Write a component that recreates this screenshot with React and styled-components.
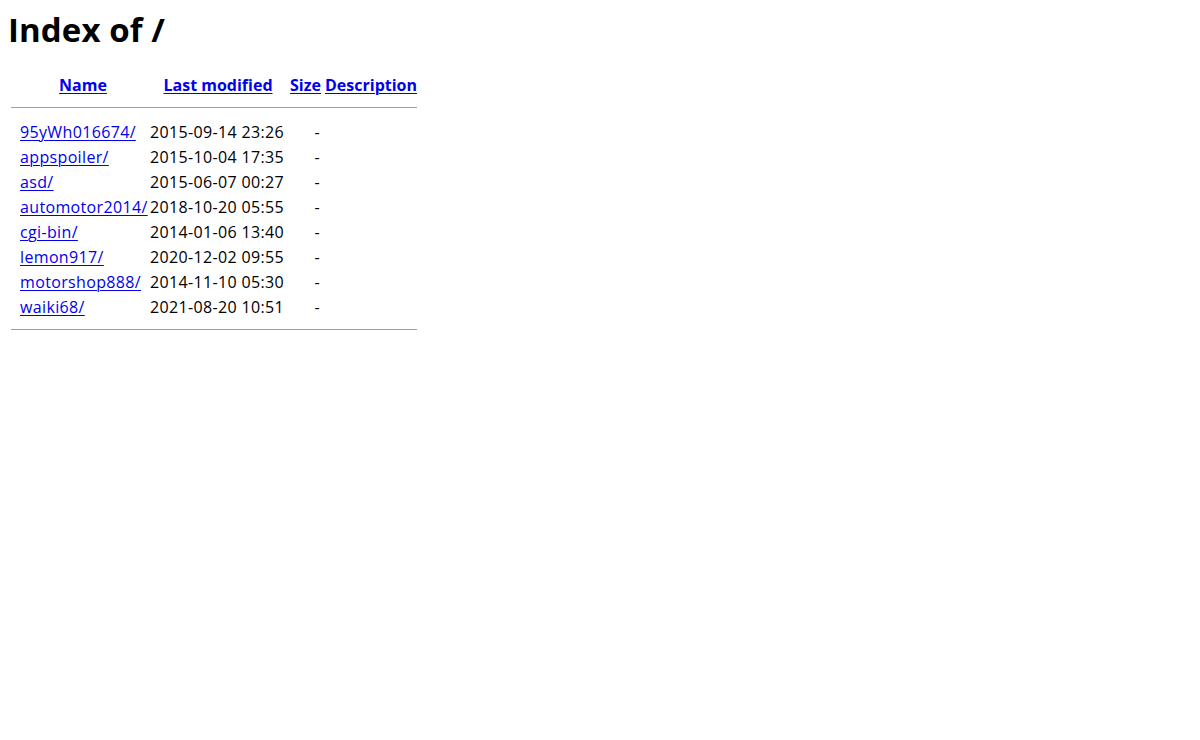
import React from "react";
import styled, { createGlobalStyle } from "styled-components";

const Global = createGlobalStyle`
  html, body { background: #fff; }
  body {
    margin: 0;
    font-family: "Open Sans", "Noto Sans", sans-serif;
    color: #000;
  }
`;

const Page = styled.div`
  padding: 8px;
`;

const Title = styled.h1`
  margin: 1px 0 0;
  font-size: 33px;
  line-height: 42px;
  font-weight: 700;
  letter-spacing: 0.1px;
`;

const Listing = styled.div`
  display: grid;
  grid-template-columns: 8px 130px 140px 35px 96px;
  margin: 22px 0 0 2px;
  font-size: 16px;
  line-height: 25px;
  width: max-content;
`;

const Head = styled.div`
  font-weight: 700;
  text-align: center;
  white-space: nowrap;
`;

const Cell = styled.div`
  white-space: nowrap;
  letter-spacing: 0.35px;
  padding-left: ${(p) => (p.$right ? 0 : 2)}px;
  padding-right: ${(p) => (p.$right ? 3 : 0)}px;
  text-align: ${(p) => (p.$right ? "right" : "left")};
`;

const Link = styled.a`
  color: #0000ee;
  text-decoration: underline;
  text-underline-offset: 2px;
  text-decoration-thickness: 1px;
`;

const Rule = styled.div`
  grid-column: 1 / -1;
  height: 1px;
  background: #a0a0a0;
  margin: ${(p) => p.$top} 2px ${(p) => p.$bottom} 1px;
`;

const rows = [
  ["95yWh016674/", "2015-09-14 23:26"],
  ["appspoiler/", "2015-10-04 17:35"],
  ["asd/", "2015-06-07 00:27"],
  ["automotor2014/", "2018-10-20 05:55"],
  ["cgi-bin/", "2014-01-06 13:40"],
  ["lemon917/", "2020-12-02 09:55"],
  ["motorshop888/", "2014-11-10 05:30"],
  ["waiki68/", "2021-08-20 10:51"],
];

export default function App() {
  return (
    <Page>
      <Global />
      <Title>Index of /</Title>
      <Listing>
        <Head />
        <Head><Link href="#">Name</Link></Head>
        <Head><Link href="#">Last modified</Link></Head>
        <Head><Link href="#">Size</Link></Head>
        <Head><Link href="#">Description</Link></Head>
        <Rule $top="9px" $bottom="12px" />
        {rows.map(([name, date]) => (
          <React.Fragment key={name}>
            <Cell />
            <Cell><Link href="#">{name}</Link></Cell>
            <Cell>{date}</Cell>
            <Cell $right>-</Cell>
            <Cell>&nbsp;</Cell>
          </React.Fragment>
        ))}
        <Rule $top="9px" $bottom="0" />
      </Listing>
    </Page>
  );
}
